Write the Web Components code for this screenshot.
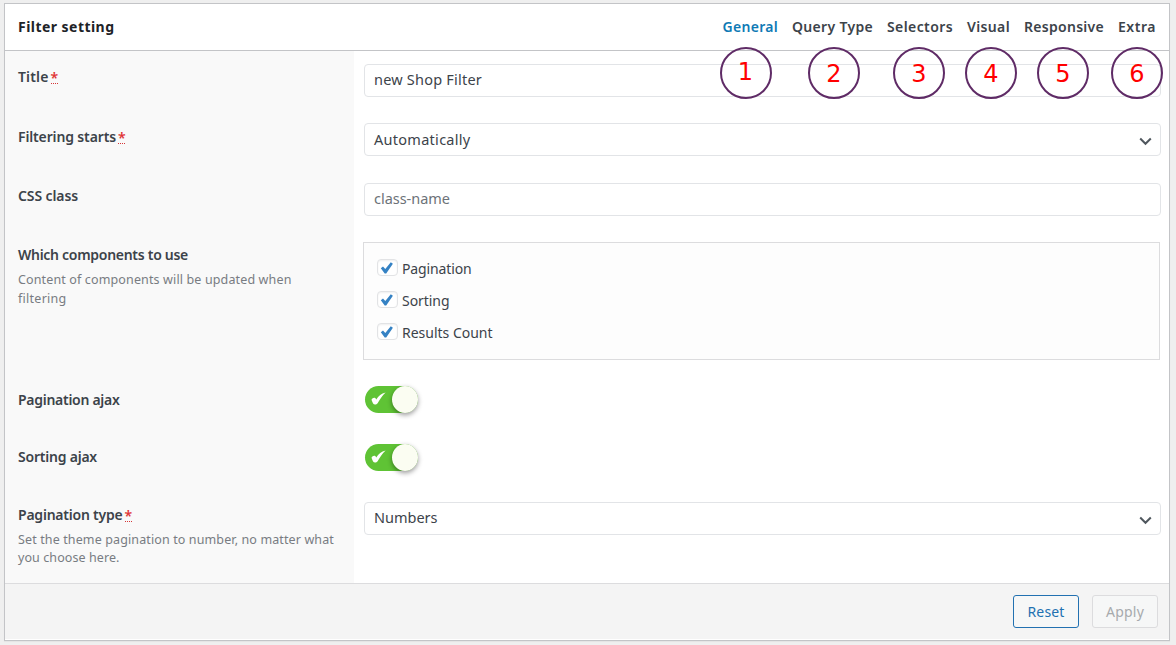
<!DOCTYPE html>
<html lang="en">
<head>
<meta charset="utf-8">
<title>Filter setting</title>
<style>
html,body{margin:0;height:100%}
body{background:#efefef;font-family:"Noto Sans","Open Sans",sans-serif;font-size:14px;color:#3c434a;overflow:hidden}
</style>
</head>
<body>
<filter-panel></filter-panel>
<script>
const define = (name, html, init) => {
  const t = document.createElement('template');
  t.innerHTML = html;
  customElements.define(name, class extends HTMLElement {
    constructor() {
      super();
      this.attachShadow({ mode: 'open' }).append(t.content.cloneNode(true));
    }
    connectedCallback() { if (init) init(this, this.shadowRoot); }
  });
};

// One line of text whose tracking is adjusted to fill the width given in "w".
define('fit-text', `<style>
:host{display:inline-block;white-space:nowrap;line-height:20px}
span{display:inline-block}
</style><span><slot></slot></span>`, (el, root) => {
  const span = root.querySelector('span');
  const w = +el.getAttribute('w'), n = el.textContent.length;
  const natural = span.getBoundingClientRect().width;
  span.style.letterSpacing = (w - natural) / n + 'px';
  el.style.width = w + 'px';
});

define('number-marker', `<style>
:host{position:absolute;box-sizing:border-box;width:52px;height:52px;top:30px;left:50%;margin-left:calc(-26px + var(--dx,0px));border:2px solid #5f2b66;border-radius:50%;display:flex;align-items:center;justify-content:center;font:24px/1 "DejaVu Sans",sans-serif;color:#f00;z-index:2}
span{position:relative;top:var(--dy,1px)}
</style><span><slot></slot></span>`);

define('nav-tab', `<style>
:host{display:block;position:relative;height:20px;font-size:14px;font-weight:600;color:#3c434a}
:host([active]){color:#0f7ab5}
</style><slot></slot><slot name="marker"></slot>`);

define('form-row', `<style>
:host{display:grid;grid-template-columns:349px 1fr}
.l{background:#f9f9f9;padding:calc(16px + var(--ly,0px)) 13px 0;box-sizing:border-box}
.f{padding:13px 8px 0 10px;box-sizing:border-box}
.t{display:flex;height:20px;font-weight:600;font-size:14px}
.d{color:#787c82;font-size:12.5px;padding-top:5px;display:flex;flex-direction:column}
::slotted([slot=hint]){height:var(--hint,18.5px)}
</style><div class="l"><div class="t"><slot name="label"></slot></div><div class="d"><slot name="hint"></slot></div></div><div class="f"><slot></slot></div>`,
 (el, r) => { el.style.height = el.getAttribute('h') + 'px'; });

define('req-mark', `<style>
:host{display:block;width:7px;height:16px;margin:0 0 0 2px;border-bottom:1px dotted #d63638;color:#e03535;line-height:21px;font-size:14px}
</style>*`);

define('text-field', `<style>
:host{display:flex;align-items:flex-start;justify-content:space-between;box-sizing:border-box;height:33px;border:1px solid #e2e4e7;border-radius:4px;background:#fff;padding:4px 8px 0 9px;font-size:14.5px;color:#3c434a}
:host([low]){padding-top:5px}
:host([placeholder]){color:#6c7278}
svg{display:none;margin-top:9px}
:host([low]) svg{margin-top:8px}
:host([select]) svg{display:block}
</style><slot></slot><svg width="13" height="9" viewBox="0 0 13 9"><path d="M1.2 1.5 6.5 6.8 11.8 1.5" fill="none" stroke="#50575e" stroke-width="2"/></svg>`);

define('check-item', `<style>
:host{display:flex;height:20px;align-items:center;gap:4px;font-size:14px}
i{box-sizing:border-box;width:21px;height:17px;margin-top:-3px;border:1px solid #e2e3e5;border-radius:4px;background:#fff;box-shadow:inset 0 1px 2px #0001;display:block}
svg{display:block}
</style><i><svg width="18" height="15" viewBox="0 0 18 15"><path d="M2.8 8.2 5 6.4 7.3 9 12.8 2.2 14.9 3.7 8.2 13.4 6.7 13.4Z" fill="#3582c4"/></svg></i><slot></slot>`);

define('check-group', `<style>
:host{display:flex;flex-direction:column;gap:12px;box-sizing:border-box;height:118px;margin:0 1px 0 -1px;padding:16px 13px;border:1px solid #dcdcde;background:#fdfdfd}
</style><slot></slot>`);

define('toggle-switch', `<style>
:host{display:flex;justify-content:space-between;width:53px;height:27px;margin-left:1px;border-radius:14px;background:#5fc335;color:#fff}
svg{margin:6px 0 0 6px}
b{width:26px;height:27px;border-radius:50%;background:#fbfdf2;box-shadow:0 2px 5px #0006}
</style><svg width="15" height="13" viewBox="0 0 15 13"><path d="M.6 8C.5 6.4 2.8 5.3 4.2 6 4.8 6.3 5 7 5.3 7.5 7.5 4 10.3 1.2 14.6.5 11 3.8 8.9 7.4 6.6 11.2 5.4 12.9 2.9 12.9 2.1 11.6 1.5 10.5 1 9.3.6 8Z" fill="#fff"/></svg><b></b>`);

define('push-button', `<style>
:host{display:flex;box-sizing:border-box;width:66px;height:33px;border:1px solid #2271b1;border-radius:3px;background:#f6f7f7;color:#2271b1;align-items:center;justify-content:center;font-size:14px}
:host([disabled]){border-color:#dcdcde;color:#a7aaad}
</style><slot></slot>`);

define('filter-panel', `<style>
:host{display:block;padding:3px 6px 4px 4px}
section{box-sizing:border-box;height:638px;border:1px solid #c3c4c7;background:#fff;display:flex;flex-direction:column;box-shadow:0 1px 1px #0000000a}
header{height:46px;border-bottom:1px solid #c3c4c7;display:flex;justify-content:space-between;align-items:center;padding:0 13px}
h2{margin:0;font-size:14px;font-weight:700;color:#1d2327;display:flex}
nav{display:flex;gap:14px}
main{height:532px}
footer{height:56px;box-sizing:border-box;border-top:1px solid #dcdcde;background:#f4f4f4;display:flex;justify-content:flex-end;gap:13px;padding:11px 11px 0}
</style>
<section>
<header><h2><fit-text w="96.5">Filter setting</fit-text></h2>
<nav>
<nav-tab active><fit-text w="55.5">General</fit-text><number-marker slot="marker" style="--dx:-4.75px;--dy:-1px">1</number-marker></nav-tab>
<nav-tab><fit-text w="81">Query Type</fit-text><number-marker slot="marker" style="--dx:1.5px">2</number-marker></nav-tab>
<nav-tab><fit-text w="66">Selectors</fit-text><number-marker slot="marker" style="--dx:-1px">3</number-marker></nav-tab>
<nav-tab><fit-text w="43">Visual</fit-text><number-marker slot="marker" style="--dx:2.5px">4</number-marker></nav-tab>
<nav-tab><fit-text w="80">Responsive</fit-text><number-marker slot="marker" style="--dx:-1px">5</number-marker></nav-tab>
<nav-tab><fit-text w="38">Extra</fit-text><number-marker slot="marker">6</number-marker></nav-tab>
</nav></header>
<main>
<form-row h="59"><fit-text slot="label" w="30.5">Title</fit-text><req-mark slot="label"></req-mark><text-field><fit-text w="108">new Shop Filter</fit-text></text-field></form-row>
<form-row h="60" style="--ly:1px"><fit-text slot="label" w="98">Filtering starts</fit-text><req-mark slot="label"></req-mark><text-field select low><fit-text w="96.5">Automatically</fit-text></text-field></form-row>
<form-row h="59"><fit-text slot="label" w="60">CSS class</fit-text><text-field placeholder><fit-text w="76">class-name</fit-text></text-field></form-row>
<form-row h="144" style="--hint:19px"><fit-text slot="label" w="170">Which components to use</fit-text><fit-text slot="hint" w="273.5">Content of components will be updated when</fit-text><fit-text slot="hint" w="48.5">filtering</fit-text>
<check-group><check-item><fit-text w="69.5">Pagination</fit-text></check-item><check-item><fit-text w="47.5">Sorting</fit-text></check-item><check-item><fit-text w="90.5">Results Count</fit-text></check-item></check-group></form-row>
<form-row h="58" style="--ly:1px"><fit-text slot="label" w="101.5">Pagination ajax</fit-text><toggle-switch></toggle-switch></form-row>
<form-row h="58"><fit-text slot="label" w="79">Sorting ajax</fit-text><toggle-switch></toggle-switch></form-row>
<form-row h="94" style="--hint:18px"><fit-text slot="label" w="104.5">Pagination type</fit-text><req-mark slot="label"></req-mark><fit-text slot="hint" w="316">Set the theme pagination to number, no matter what</fit-text><fit-text slot="hint" w="101.5">you choose here.</fit-text><text-field select><fit-text w="63.5">Numbers</fit-text></text-field></form-row>
</main>
<footer><push-button><fit-text w="37">Reset</fit-text></push-button><push-button disabled><fit-text w="38">Apply</fit-text></push-button></footer>
</section>`);
</script>
</body>
</html>
